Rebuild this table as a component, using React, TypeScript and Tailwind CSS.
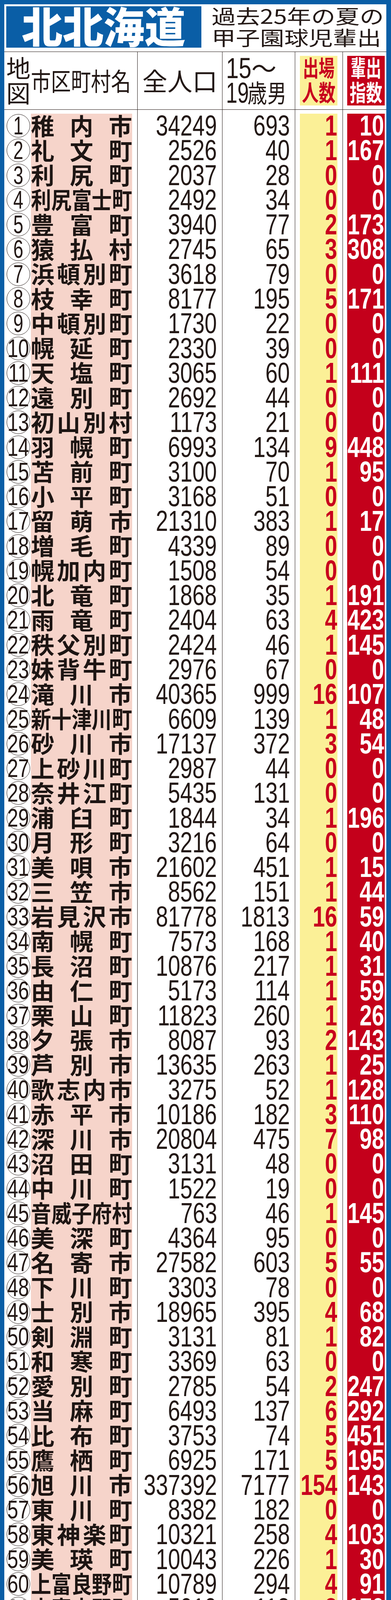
const rows: [string, number, number, number, number][] = [
  ["稚内市", 34249, 693, 1, 10],
  ["礼文町", 2526, 40, 1, 167],
  ["利尻町", 2037, 28, 0, 0],
  ["利尻富士町", 2492, 34, 0, 0],
  ["豊富町", 3940, 77, 2, 173],
  ["猿払村", 2745, 65, 3, 308],
  ["浜頓別町", 3618, 79, 0, 0],
  ["枝幸町", 8177, 195, 5, 171],
  ["中頓別町", 1730, 22, 0, 0],
  ["幌延町", 2330, 39, 0, 0],
  ["天塩町", 3065, 60, 1, 111],
  ["遠別町", 2692, 44, 0, 0],
  ["初山別村", 1173, 21, 0, 0],
  ["羽幌町", 6993, 134, 9, 448],
  ["苫前町", 3100, 70, 1, 95],
  ["小平町", 3168, 51, 0, 0],
  ["留萌市", 21310, 383, 1, 17],
  ["増毛町", 4339, 89, 0, 0],
  ["幌加内町", 1508, 54, 0, 0],
  ["北竜町", 1868, 35, 1, 191],
  ["雨竜町", 2404, 63, 4, 423],
  ["秩父別町", 2424, 46, 1, 145],
  ["妹背牛町", 2976, 67, 0, 0],
  ["滝川市", 40365, 999, 16, 107],
  ["新十津川町", 6609, 139, 1, 48],
  ["砂川市", 17137, 372, 3, 54],
  ["上砂川町", 2987, 44, 0, 0],
  ["奈井江町", 5435, 131, 0, 0],
  ["浦臼町", 1844, 34, 1, 196],
  ["月形町", 3216, 64, 0, 0],
  ["美唄市", 21602, 451, 1, 15],
  ["三笠市", 8562, 151, 1, 44],
  ["岩見沢市", 81778, 1813, 16, 59],
  ["南幌町", 7573, 168, 1, 40],
  ["長沼町", 10876, 217, 1, 31],
  ["由仁町", 5173, 114, 1, 59],
  ["栗山町", 11823, 260, 1, 26],
  ["夕張市", 8087, 93, 2, 143],
  ["芦別市", 13635, 263, 1, 25],
  ["歌志内市", 3275, 52, 1, 128],
  ["赤平市", 10186, 182, 3, 110],
  ["深川市", 20804, 475, 7, 98],
  ["沼田町", 3131, 48, 0, 0],
  ["中川町", 1522, 19, 0, 0],
  ["音威子府村", 763, 46, 1, 145],
  ["美深町", 4364, 95, 0, 0],
  ["名寄市", 27582, 603, 5, 55],
  ["下川町", 3303, 78, 0, 0],
  ["士別市", 18965, 395, 4, 68],
  ["剣淵町", 3131, 81, 1, 82],
  ["和寒町", 3369, 63, 0, 0],
  ["愛別町", 2785, 54, 2, 247],
  ["当麻町", 6493, 137, 6, 292],
  ["比布町", 3753, 74, 5, 451],
  ["鷹栖町", 6925, 171, 5, 195],
  ["旭川市", 337392, 7177, 154, 143],
  ["東川町", 8382, 182, 0, 0],
  ["東神楽町", 10321, 258, 4, 103],
  ["美瑛町", 10043, 226, 1, 30],
  ["上富良野町", 10789, 294, 4, 91],
  ["中富良野町", 5019, 118, 3, 170],
  ["富良野市", 21921, 474, 0, 0],
  ["南富良野町", 2515, 64, 0, 0],
  ["占冠村", 1508, 17, 0, 0],
  ["上川町", 3594, 70, 1, 95],
  ["滝上町", 2603, 50, 0, 0],
  ["西興部村", 1114, 15, 1, 444],
  ["雄武町", 4422, 93, 1, 72],
  ["興部町", 3815, 96, 2, 139],
  ["紋別市", 22044, 432, 4, 62],
  ["湧別町", 8862, 186, 2, 72],
  ["遠軽町", 19984, 430, 1, 16],
  ["佐呂間町", 5212, 91, 3, 220],
  ["北見市", 117806, 2536, 9, 24],
  ["置戸町", 2921, 53, 2, 252],
  ["訓子府町", 5000, 120, 1, 56],
  ["津別町", 4713, 100, 1, 67],
  ["美幌町", 19578, 455, 2, 29],
  ["大空町", 7235, 160, 0, 0],
  ["網走市", 35704, 851, 3, 24],
  ["小清水町", 4897, 89, 0, 0],
  ["清里町", 4110, 91, 0, 0],
  ["斜里町", 11610, 233, 1, 29],
  ["羅臼町", 5091, 120, 3, 167],
  ["標津町", 5347, 130, 1, 51],
  ["中標津町", 23493, 595, 5, 56],
  ["別海町", 15171, 378, 5, 88],
  ["根室市", 25953, 552, 6, 73],
  ["浜中町", 5860, 132, 0, 0],
  ["厚岸町", 9396, 205, 6, 195],
  ["標茶町", 7619, 166, 2, 80],
  ["弟子屈町", 7255, 123, 0, 0],
  ["鶴居村", 2534, 73, 1, 91],
  ["釧路町", 19802, 502, 1, 13],
  ["釧路市", 170364, 3721, 14, 25],
  ["白糠町", 7918, 167, 2, 80],
  ["浦幌町", 4754, 89, 0, 0],
  ["豊頃町", 3205, 67, 1, 100],
  ["池田町", 6750, 135, 2, 99],
  ["本別町", 7087, 182, 1, 37],
  ["陸別町", 2389, 39, 0, 0],
  ["足寄町", 6928, 127, 1, 53],
  ["上士幌町", 5000, 87, 0, 0],
  ["士幌町", 6163, 135, 0, 0],
  ["新得町", 6217, 107, 0, 0],
  ["鹿追町", 5433, 142, 0, 0],
  ["清水町", 9494, 203, 0, 0],
  ["音更町", 44660, 1216, 12, 66],
  ["芽室町", 18667, 491, 3, 41],
  ["帯広市", 166889, 3627, 34, 63],
  ["幕別町", 26844, 675, 7, 69],
  ["更別村", 3175, 76, 3, 263],
  ["中札内村", 3918, 78, 1, 86],
  ["大樹町", 5627, 108, 1, 62],
  ["広尾町", 6888, 157, 1, 43],
];

const jp = "font-['Noto_Sans_CJK_JP',sans-serif]";
const num = "font-['Liberation_Sans',Arial,sans-serif]";

function Circle({ n }: { n: number }) {
  const s =
    n < 10
      ? "scale-x-[0.72] text-[64px]"
      : n < 100
        ? "scale-x-[0.78] text-[64px]"
        : "scale-x-[0.5] text-[54px]";
  return (
    <div className="h-[63.27px] flex items-center">
      <div className="w-[60px] h-[60px] rounded-full border-[1.5px] border-[#231815] flex items-center justify-center">
        <span className={`${num} ${s} inline-block leading-none text-[#231815]`}>{n}</span>
      </div>
    </div>
  );
}

function Name({ name }: { name: string }) {
  const chars = [...name];
  const five = chars.length >= 5;
  return (
    <div className="h-[63.27px] flex items-center justify-between px-[1px] pb-[5px]">
      {chars.map((c, i) => (
        <span
          key={i}
          className={five ? "w-[50px] flex justify-center" : "w-[58px] flex justify-center"}
        >
          <span className={five ? "inline-block scale-x-[0.86]" : "inline-block"}>{c}</span>
        </span>
      ))}
    </div>
  );
}

function Num({ v, cls }: { v: number; cls: string }) {
  return (
    <div className={`h-[63.27px] flex items-center justify-end ${cls}`}>
      <span className={`${num} inline-block origin-right scale-x-[0.76] text-[74px] leading-none`}>{v}</span>
    </div>
  );
}

export default function App() {
  return (
    <div className="w-[1000px] h-[7583px] bg-[#0a5ea6] pt-[11px] pl-[11px] pr-[12px] pb-[11px]">
      <div className="w-full h-full bg-white flex flex-col text-[#231815]">
        {/* title */}
        <div className="h-[121px] flex items-start shrink-0">
          <div
            className={`${jp} mt-[5px] ml-[5px] w-[499px] h-[106px] bg-[#0a5ea6] flex items-center justify-center pb-[12px] text-white font-black text-[108px] leading-none`}
          >
            <span className="inline-block scale-x-[0.97]">北北海道</span>
          </div>
          <div className={`${jp} ml-[26px] pt-[1px] text-[50px] leading-[55px]`}>
            <div>
              <span className="inline-block origin-left scale-x-[1.24] whitespace-nowrap">過去25年の夏の</span>
            </div>
            <div>
              <span className="inline-block origin-left scale-x-[1.24] whitespace-nowrap">甲子園球児輩出</span>
            </div>
          </div>
        </div>

        {/* table */}
        <div className="flex-1 flex border-t-[1.5px] border-[#231815]">
          {/* col 1 */}
          <div className="w-[340px] flex flex-col">
            <div className={`${jp} h-[148px] shrink-0 border-b-[1.5px] border-[#231815] flex items-center pl-[5px] pb-[5px]`}>
              <div className="flex flex-col text-[62px] leading-[64.5px]">
                <span>地</span>
                <span>図</span>
              </div>
              <span className="ml-[1px] inline-block origin-left scale-x-[0.8] text-[64px] leading-none whitespace-nowrap">
                市区町村名
              </span>
            </div>
            <div className="flex pt-[9.5px]">
              <div className="ml-[6px] w-[60px] flex flex-col">
                {rows.map((r, i) => (
                  <Circle key={i} n={i + 1} />
                ))}
              </div>
              <div className={`${jp} ml-[2px] w-[259px] bg-[#f6d4ca] flex flex-col font-bold text-[60px] leading-none text-[#1d1513]`}>
                {rows.map((r, i) => (
                  <Name key={i} name={r[0]} />
                ))}
              </div>
            </div>
          </div>

          {/* col 2 */}
          <div className="w-[217px] flex flex-col border-l-[1.5px] border-[#231815]">
            <div className={`${jp} h-[148px] shrink-0 border-b-[1.5px] border-[#231815] flex items-center justify-center pb-[5px] text-[64px] leading-none`}>
              全人口
            </div>
            <div className="flex flex-col pt-[9.5px]">
              {rows.map((r, i) => (
                <Num key={i} v={r[1]} cls="pr-[13px]" />
              ))}
            </div>
          </div>

          {/* col 3 */}
          <div className="w-[186px] flex flex-col border-l-[1.5px] border-[#231815]">
            <div className="h-[148px] shrink-0 border-b-[1.5px] border-[#231815] flex flex-col pt-[10px] pl-[9px]">
              <div className="h-[63px] flex items-center">
                <span className="w-[65px] shrink-0">
                  <span className={`${num} inline-block origin-left scale-x-[0.78] text-[75px] leading-none`}>15</span>
                </span>
                <span className={`${jp} mb-[7px] text-[64px] leading-none`}>～</span>
              </div>
              <div className="h-[63px] flex items-center">
                <span className="w-[55px] shrink-0">
                  <span className={`${num} inline-block origin-left scale-x-[0.7] text-[75px] leading-none`}>19</span>
                </span>
                <span className={`${jp} mb-[7px] w-[51px] shrink-0 text-[64px] leading-none`}>
                  <span className="inline-block origin-left scale-x-[0.78]">歳</span>
                </span>
                <span className={`${jp} mb-[7px] text-[64px] leading-none`}>
                  <span className="inline-block origin-left scale-x-[0.76]">男</span>
                </span>
              </div>
            </div>
            <div className="flex flex-col pt-[9.5px]">
              {rows.map((r, i) => (
                <Num key={i} v={r[2]} cls="pr-[13px]" />
              ))}
            </div>
          </div>

          {/* col 4 */}
          <div className="w-[122px] flex flex-col border-l-[1.5px] border-[#231815]">
            <div className="h-[148px] shrink-0 border-b-[1.5px] border-[#231815] pt-[9.5px] pl-[11.5px]">
              <div className={`${jp} w-[96px] h-[127px] bg-[#fbf097] flex flex-col justify-center items-center pb-[6px] text-[#c8001e] font-bold text-[58px] leading-[63px]`}>
                <span className="inline-block scale-x-[0.7] whitespace-nowrap">出場</span>
                <span className="inline-block scale-x-[0.74] whitespace-nowrap">人数</span>
              </div>
            </div>
            <div className="flex-1 pt-[9.5px] pl-[11.5px] pb-[5px]">
              <div className="w-[96px] h-full bg-[#fbf097] flex flex-col text-[#c8001e] font-bold">
                {rows.map((r, i) => (
                  <Num key={i} v={r[3]} cls="pr-0" />
                ))}
              </div>
            </div>
          </div>

          {/* col 5 */}
          <div className="w-[112px] flex flex-col border-l-[1.5px] border-[#231815]">
            <div className="h-[148px] shrink-0 border-b-[1.5px] border-[#231815] pt-[9.5px] pl-[10.5px]">
              <div className={`${jp} w-[96px] h-[127px] bg-[#c4001b] flex flex-col justify-center items-center pb-[6px] text-white font-bold text-[58px] leading-[63px]`}>
                <span className="inline-block scale-x-[0.68] whitespace-nowrap">輩出</span>
                <span className="inline-block scale-x-[0.72] whitespace-nowrap">指数</span>
              </div>
            </div>
            <div className="flex-1 pt-[9.5px] pl-[10.5px] pb-[5px]">
              <div className="w-[96px] h-full bg-[#c4001b] flex flex-col text-white font-bold">
                {rows.map((r, i) => (
                  <Num key={i} v={r[4]} cls="pr-[1px]" />
                ))}
              </div>
            </div>
          </div>
        </div>
      </div>
    </div>
  );
}
